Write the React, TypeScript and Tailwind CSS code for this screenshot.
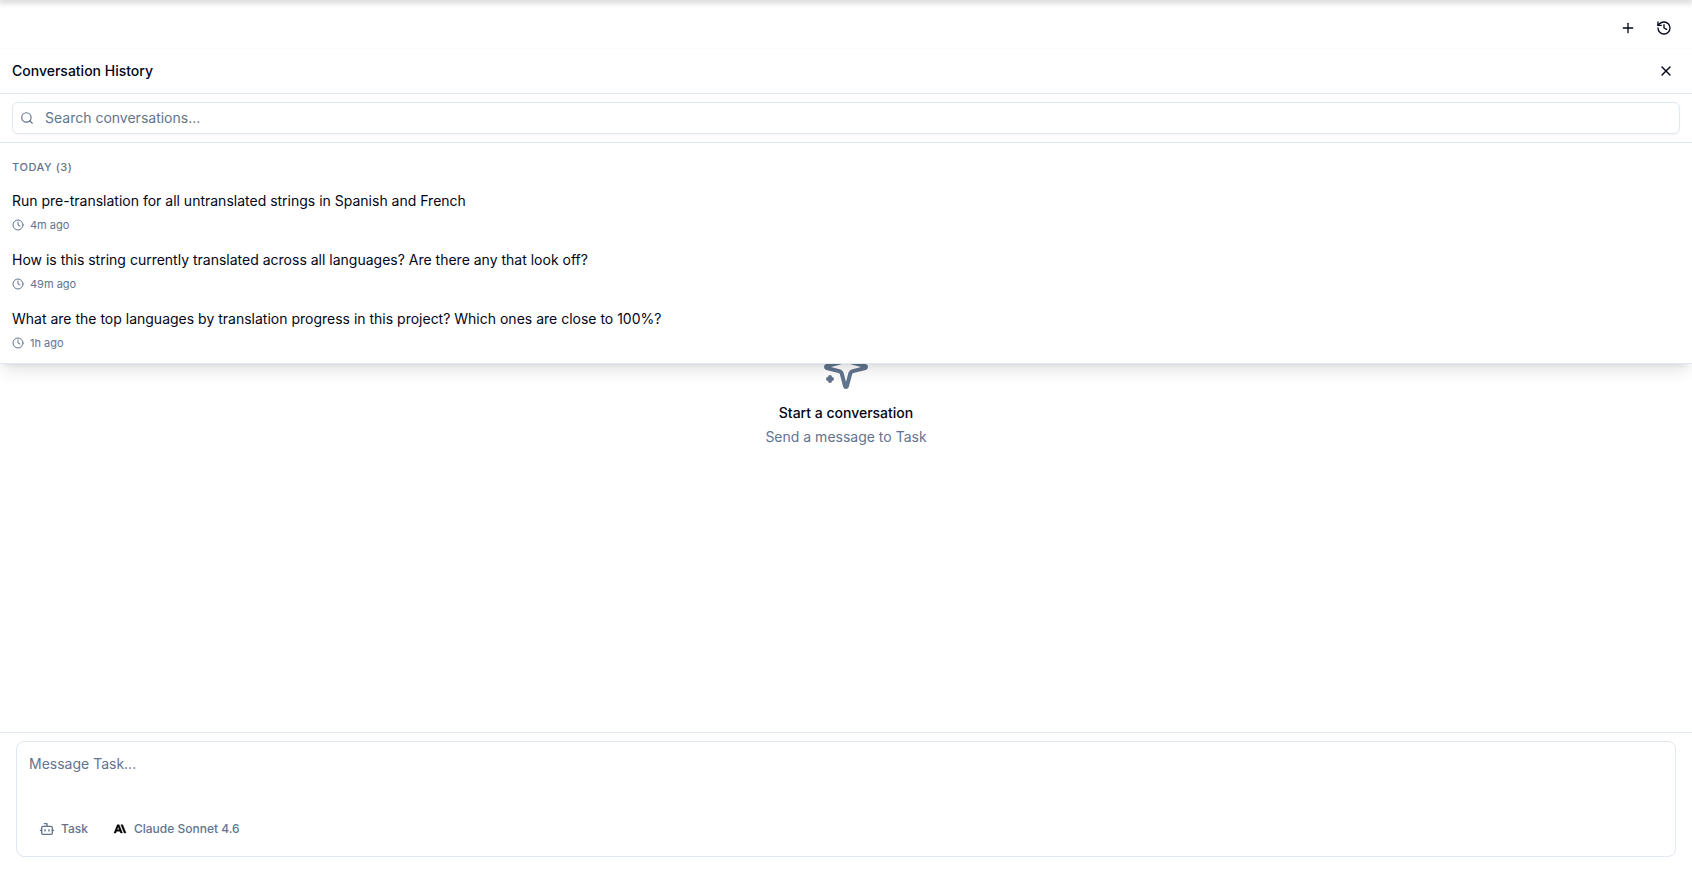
import { useState } from "react";
import { Bot, Clock, History, Plus, Search, X } from "lucide-react";

const conversations = [
  { id: 1, title: "Run pre-translation for all untranslated strings in Spanish and French", time: "4m ago" },
  { id: 2, title: "How is this string currently translated across all languages? Are there any that look off?", time: "49m ago" },
  { id: 3, title: "What are the top languages by translation progress in this project? Which ones are close to 100%?", time: "1h ago" },
];

export default function App() {
  const [historyOpen, setHistoryOpen] = useState(true);

  return (
    <div className="relative flex min-h-screen flex-col bg-white font-['Inter',sans-serif] text-sm text-slate-950">
      <div className="h-0 shadow-[0_0_6px_2px_rgba(0,0,0,0.25)]" />
      <header className="relative z-10 flex justify-end gap-1 px-3 pt-3 pb-1">
        <IconButton label="New conversation" large>
          <Plus className="size-4" />
        </IconButton>
        <IconButton label="History" large onClick={() => setHistoryOpen(!historyOpen)}>
          <History className="size-4" />
        </IconButton>
        {historyOpen && <HistoryPanel onClose={() => setHistoryOpen(false)} />}
      </header>

      <main className="flex flex-1 flex-col items-center justify-center pt-2.5 text-center">
        <SparkleIcon />
        <h3 className="mt-3 font-medium leading-5">Start a conversation</h3>
        <p className="mt-1 leading-5 text-slate-500">Send a message to Task</p>
      </main>

      <Composer />
    </div>
  );
}

function HistoryPanel({ onClose }: { onClose: () => void }) {
  const [query, setQuery] = useState("");
  const visible = conversations.filter((c) => c.title.toLowerCase().includes(query.toLowerCase()));

  return (
    <section className="absolute inset-x-0 top-full border-t border-b border-t-slate-50/50 border-b-slate-200 bg-white shadow-lg">
      <div className="flex items-center justify-between border-b border-slate-200 px-3 py-2">
        <h2 className="font-medium">Conversation History</h2>
        <IconButton label="Close history" onClick={onClose}>
          <X className="size-4" />
        </IconButton>
      </div>
      <div className="border-b border-slate-200 px-3 py-2">
        <label className="relative flex items-center">
          <Search className="absolute left-2 size-3.5 text-slate-500" />
          <input
            type="text"
            aria-label="Search conversations"
            placeholder="Search conversations..."
            value={query}
            onChange={(e) => setQuery(e.target.value)}
            className="h-8 w-full rounded-md border border-slate-200 pr-3 pb-0.5 pl-8 text-sm shadow-xs outline-none placeholder:text-slate-500"
          />
        </label>
      </div>
      <h3 className="px-3 pt-4 pb-1.5 text-[11px] leading-[17px] font-medium tracking-wider text-slate-500 uppercase">
        Today ({visible.length})
      </h3>
      <ul className="pb-1">
        {visible.map((c) => (
          <li key={c.id}>
            <button type="button" className="w-full px-3 py-2 text-left">
              <span className="block leading-[21px]">{c.title}</span>
              <span className="mt-1.5 flex items-center gap-1.5 text-[11px] leading-4 text-slate-500">
                <Clock className="size-3" />
                {c.time}
              </span>
            </button>
          </li>
        ))}
      </ul>
    </section>
  );
}

function Composer() {
  return (
    <footer className="border-t border-slate-200 px-4 pt-2 pb-4">
      <div className="rounded-lg border border-slate-200 p-3">
        <textarea
          aria-label="Message Task"
          placeholder="Message Task..."
          className="block h-15 w-full resize-none text-sm leading-5 outline-none placeholder:text-slate-500"
        />
        <div className="flex gap-1 text-xs font-medium text-slate-500">
          <button type="button" className="flex h-[30px] items-center gap-1.5 px-2.5">
            <Bot className="size-4" />
            Task
          </button>
          <button type="button" className="flex h-[30px] items-center gap-1.5 px-2.5">
            <AnthropicLogo />
            Claude Sonnet 4.6
          </button>
        </div>
      </div>
    </footer>
  );
}

function IconButton({
  label,
  large,
  onClick,
  children,
}: {
  label: string;
  large?: boolean;
  onClick?: () => void;
  children: React.ReactNode;
}) {
  return (
    <button
      type="button"
      aria-label={label}
      onClick={onClick}
      className={`flex items-center justify-center rounded-md hover:bg-slate-100 ${large ? "size-8" : "size-7"}`}
    >
      {children}
    </button>
  );
}

function SparkleIcon() {
  return (
    <svg viewBox="0 0 24 24" className="size-12 text-slate-500" fill="none" stroke="currentColor" strokeWidth="2" strokeLinecap="round" strokeLinejoin="round">
      <path d="M9.937 15.5A2 2 0 0 0 8.5 14.063l-6.135-1.582a.5.5 0 0 1 0-.962L8.5 9.936A2 2 0 0 0 9.937 8.5l1.582-6.135a.5.5 0 0 1 .963 0L14.063 8.5A2 2 0 0 0 15.5 9.937l6.135 1.581a.5.5 0 0 1 0 .964L15.5 14.063a2 2 0 0 0-1.437 1.437l-1.582 6.135a.5.5 0 0 1-.963 0z" />
      <path d="M20 3v4M22 5h-4M4 17v2M5 18H3" />
    </svg>
  );
}

function AnthropicLogo() {
  return (
    <svg viewBox="0 0 24 24" className="size-4 overflow-visible p-0.5 text-black" fill="currentColor" stroke="currentColor" strokeWidth="0.8">
      <path d="M13.827 3.52h3.603L24 20h-3.603l-6.57-16.48zm-7.258 0h3.767L16.906 20h-3.674l-1.343-3.461H5.017l-1.344 3.46H0L6.57 3.522zm4.132 9.959L8.453 7.687 6.205 13.48H10.7z" />
    </svg>
  );
}
